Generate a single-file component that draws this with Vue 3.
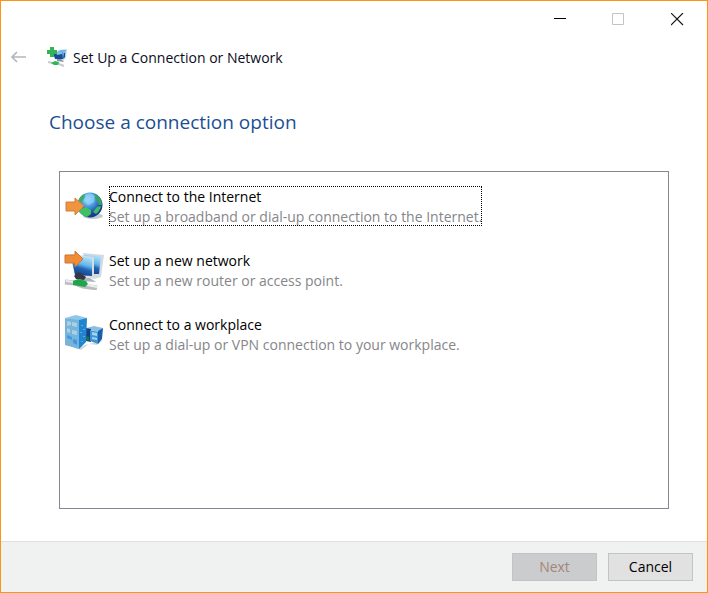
<script setup>
import { ref } from 'vue'

const options = [
  {
    id: 'internet',
    title: 'Connect to the Internet',
    text: 'Set up a broadband or dial-up connection to the Internet.'
  },
  {
    id: 'network',
    title: 'Set up a new network',
    text: 'Set up a new router or access point.'
  },
  {
    id: 'workplace',
    title: 'Connect to a workplace',
    text: 'Set up a dial-up or VPN connection to your workplace.'
  }
]

const focused = ref('internet')
</script>

<template>
  <div class="window">
    <div class="caption">
      <button type="button" class="caption_btn" aria-label="Minimize">
        <svg width="13" height="13" viewBox="0 0 13 13">
          <path d="M1 5.5h12" stroke="#000" />
        </svg>
      </button>
      <button type="button" class="caption_btn" aria-label="Maximize" disabled>
        <svg width="13" height="13" viewBox="0 0 13 13">
          <path d="M.5 .5h11v11h-11z" fill="none" stroke="#c4c4c4" />
        </svg>
      </button>
      <button type="button" class="caption_btn" aria-label="Close">
        <svg width="13" height="13" viewBox="0 0 13 13">
          <path d="M0 0l12 12M12 0L0 12" stroke="#111" stroke-width="1.1" />
        </svg>
      </button>
    </div>

    <header class="header">
      <button type="button" class="back" aria-label="Back" disabled>
        <svg width="16" height="12" viewBox="0 0 16 12">
          <path d="M2 6h14M7 1L2 6l5 5" fill="none" stroke="#b5b7ba" stroke-width="1.7" />
        </svg>
      </button>
      <svg class="header_icon" width="20" height="20" viewBox="0 0 20 20">
        <path d="M11 3l9-1-1 9-3 3-8-2z" fill="#c8d8e6" />
        <path d="M13 3l6 0-1 7-4 1z" fill="#78b7e8" />
        <path d="M6 6l9-2 1 8-8 0z" fill="#174b96" />
        <path d="M9 5l6-1 0 3-5 1z" fill="#7cc0f0" />
        <path d="M17 6l1 0v4l-2 2z" fill="#174b96" />
        <path d="M10 12h4l3 3-7-1z" fill="#8a959d" />
        <path d="M3 0h4v3h3v4H7v3H3V7H0V3h3z" fill="#30b455" />
        <path d="M1 15l5 1 6 1 5 2" fill="none" stroke="#c5cbd0" stroke-width="2" />
        <path d="M4 16l4-2 4 1-1 3-4 0z" fill="#30b455" />
      </svg>
      <span class="header_title">Set Up a Connection or Network</span>
    </header>

    <main class="content">
      <h1 class="heading">Choose a connection option</h1>

      <div class="list" role="listbox" aria-label="Choose a connection option">
        <button
          v-for="option in options"
          :key="option.id"
          type="button"
          role="option"
          class="option"
          :aria-selected="focused === option.id"
          @click="focused = option.id"
        >
          <svg
            v-if="option.id === 'internet'"
            class="option_icon"
            width="40"
            height="40"
            viewBox="0 0 40 40"
          >
            <defs>
              <radialGradient id="globe" cx="42%" cy="28%" r="70%">
                <stop offset="0" stop-color="#b4e6ff" />
                <stop offset="0.4" stop-color="#4b9be2" />
                <stop offset="0.8" stop-color="#1b459c" />
                <stop offset="1" stop-color="#123a8c" />
              </radialGradient>
            </defs>
            <ellipse cx="29" cy="30" rx="10" ry="3" fill="#c4c7cb" />
            <circle cx="26" cy="19" r="12.5" fill="url(#globe)" />
            <path d="M15 13q2-4 6-5l1 2-3 4-2 4-3 1z" fill="#42a96c" />
            <path d="M14 24l8-3 5 3 0 4-4 3q-7-2-9-7z" fill="#3fc062" />
            <path d="M31 8q7 4 7 11l-3 0-2-5-3-3z" fill="#35a65a" />
            <path d="M33 21l4-1q-1 5-5 8l-3-2z" fill="#43b968" />
            <path d="M21 9q6-4 10 1l-1 6-6 3-4-4z" fill="#8ed1fa" opacity="0.7" />
            <path d="M2 16h9v-4l9 8-9 9v-4H2z" fill="#f09440" stroke="#d07f3c" />
          </svg>
          <svg
            v-else-if="option.id === 'network'"
            class="option_icon"
            width="40"
            height="40"
            viewBox="0 0 40 40"
          >
            <defs>
              <linearGradient id="screen" x1="0.3" y1="1" x2="0.6" y2="0">
                <stop offset="0" stop-color="#123a80" />
                <stop offset="0.4" stop-color="#1f64b4" />
                <stop offset="0.6" stop-color="#65b5ea" />
                <stop offset="1" stop-color="#aee0fb" />
              </linearGradient>
            </defs>
            <path d="M19 3l21 2-3 22-7 2-9-3z" fill="#d3dae1" />
            <path d="M20 5l17 1-2 18-13 0z" fill="url(#screen)" />
            <path d="M6 4l24 3 0 21-19-2z" fill="#d7dce1" />
            <path d="M7 6l21 2 0 18-17-1z" fill="url(#screen)" />
            <path d="M17 27l9 1 6 4-15-1z" fill="#adb4bb" />
            <path d="M10 26l5-4 7 5-2 3-8-1z" fill="#393746" />
            <path d="M1 32l10 1 8 3 14 2" fill="none" stroke="#b9bec3" stroke-width="5" />
            <path d="M2 31l9 1 8 2 14 3" fill="none" stroke="#eceeef" stroke-width="2" />
            <path d="M9 31l5-2 8 2 2 3-3 3-12-2z" fill="#20a64a" />
            <path d="M1 5h10V1l8 8-8 8v-4H1z" fill="#f08d34" stroke="#c87938" />
          </svg>
          <svg v-else class="option_icon" width="40" height="40" viewBox="0 0 40 40">
            <path d="M11 34l6 2 8-6 8 1 6-5z" fill="#d6d9dc" />
            <path d="M22 14l8-2 9 2-6 4z" fill="#8bbfe2" />
            <path d="M22 14l5 1v13l-5-1z" fill="#173f86" />
            <path d="M26 16l8 2v12l-8-3z" fill="#3f93d5" />
            <path d="M34 17l5-3-1 11-4 5z" fill="#1a5eab" />
            <path d="M28 18l5 1v3l-5-1zM28 23l5 1v2l-5-1z" fill="#a2d2ef" />
            <path d="M1 4l11-3 11 3-7 3z" fill="#8fc8ea" />
            <path d="M1 4l14 2v29L1 31z" fill="#74b4df" />
            <path d="M15 6l8-2-1 24-7 7z" fill="#2184cf" />
            <path d="M3 7l4 1v3l-4 1zM8 8l5 1v4l-5-1zM3 14l3 1v4l-3-1zM8 16l5 1v4l-5-1z" fill="#acd0e2" />
            <path d="M3 21l5 2v3l-5-2zM9 25l4 1v5l-4-2z" fill="#4199db" />
            <path d="M5 12l3 1v2l-3-1zM4 27l4 1v3l-4-1z" fill="#8caebd" />
            <path d="M18 11v1M20 15v1M17 18v1M20 22v1M18 27v1" stroke="#91d1f2" />
            <path d="M22 22l3 1v4l-3-1z" fill="#17754d" />
          </svg>

          <span class="option_body" :class="{ focused: focused === option.id }">
            <span class="option_title">{{ option.title }}</span>
            <span class="option_text">{{ option.text }}</span>
          </span>
        </button>
      </div>
    </main>

    <footer class="footer">
      <button type="button" class="btn" disabled>Next</button>
      <button type="button" class="btn">Cancel</button>
    </footer>
  </div>
</template>

<style>
body {
  margin: 0;
}
</style>

<style scoped>
.window {
  display: flex;
  flex-direction: column;
  box-sizing: border-box;
  min-height: 100vh;
  border: 1px solid #ff9317;
  background: #fff;
  color: #000;
  font-family: 'Open Sans', 'Noto Sans', sans-serif;
  font-size: 14px;
  line-height: 20px;
}

button {
  padding: 0;
  border: 0;
  background: none;
  color: inherit;
  font: inherit;
}

svg {
  display: block;
}

.caption {
  display: flex;
  justify-content: flex-end;
}

.caption_btn {
  display: flex;
  align-items: center;
  justify-content: center;
  width: 59px;
  height: 37px;
}

.header {
  display: flex;
  align-items: center;
  height: 38px;
  padding-left: 9px;
}

.header_icon {
  margin: 0 6px 0 21px;
}

.header_title {
  padding-top: 2px;
  color: #0b0b1c;
}

.content {
  display: flex;
  flex: 1;
  flex-direction: column;
  padding: 30px 38px 32px 58px;
}

.heading {
  margin: 0 0 33px -10px;
  color: #1b4f94;
  font-size: 19px;
  font-weight: 400;
  line-height: 32px;
}

.list {
  display: flex;
  flex: 1;
  flex-direction: column;
  gap: 24px;
  padding: 14px 4px;
  border: 1px solid #828790;
}

.option {
  display: flex;
  align-items: flex-start;
  gap: 5px;
  text-align: left;
}

.option:focus-visible {
  outline: none;
}

.option_icon {
  flex: none;
}

.option_body {
  display: flex;
  flex-direction: column;
}

.option_body.focused {
  outline: 1px dotted #000;
  outline-offset: -1px;
}

.option_title {
  line-height: 22px;
}

.option_text {
  color: #85868a;
  line-height: 18px;
}

.footer {
  display: flex;
  justify-content: flex-end;
  gap: 11px;
  padding: 11px 14px;
  border-top: 1px solid #dfdfdf;
  background: #f0f2f1;
}

.btn {
  box-sizing: border-box;
  width: 85px;
  height: 28px;
  border: 1px solid #c3c4c6;
  background: #e1e1e1;
}

.btn:disabled {
  border-color: #c3c4c6;
  background: #cbccce;
  color: #a58577;
}
</style>
